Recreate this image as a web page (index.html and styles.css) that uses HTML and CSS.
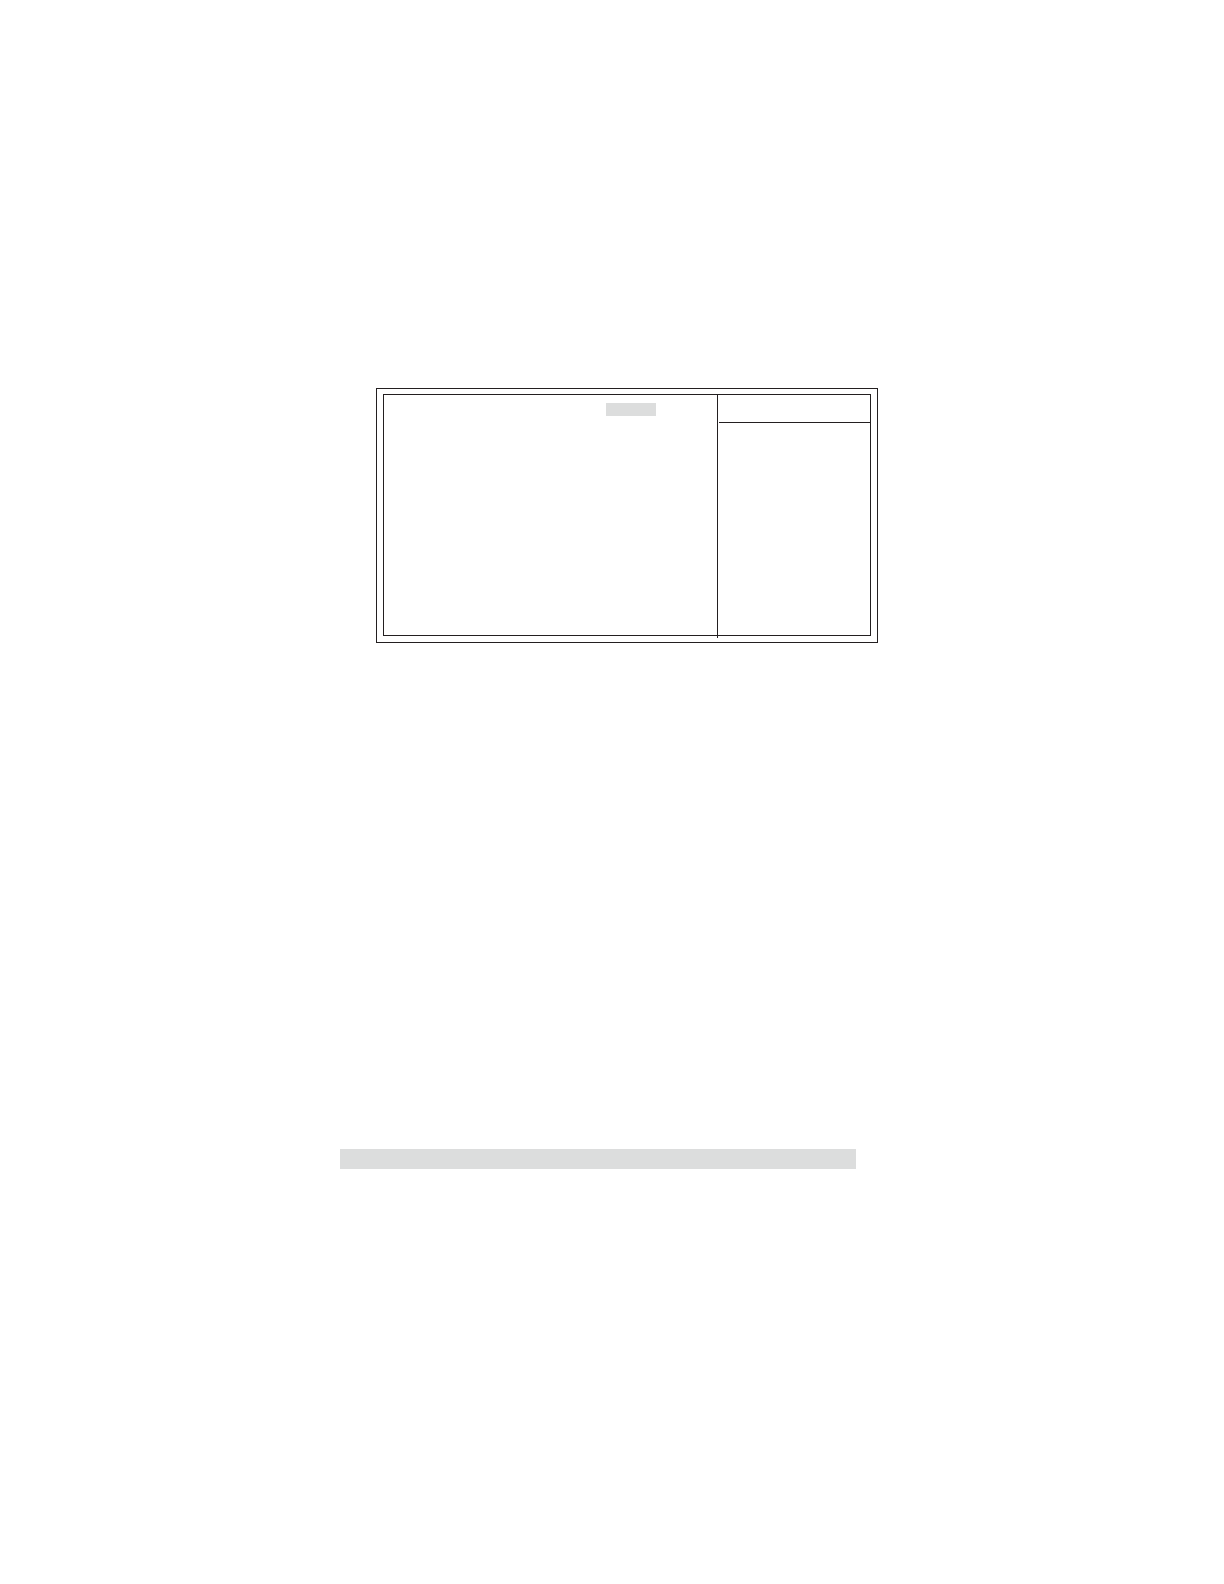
FILE: index.html
```html
<!DOCTYPE html>
<html lang="en">
<head>
<meta charset="utf-8">
<meta name="viewport" content="width=device-width, initial-scale=1">
<title>Setup screen</title>
<link rel="stylesheet" href="styles.css">
</head>
<body>
<main class="page">
  <section class="screen-row">
    <div class="screen">
      <div class="screen-inner">
        <div class="options">
          <div class="selected"></div>
        </div>
        <aside class="help">
          <div class="help-header"></div>
        </aside>
      </div>
    </div>
  </section>
  <section class="band-row">
    <div class="band"></div>
  </section>
</main>
</body>
</html>
```

FILE: styles.css
```css
:root {
  --line: #231f20;
  --shade: #dcdddd;
}

* {
  box-sizing: border-box;
}

body {
  margin: 0;
  background: #fff;
}

.page {
  min-height: 100vh;
  padding-top: 388px;
}

.screen-row {
  display: grid;
  grid-template-columns: 376fr 502fr 346fr;
}

.screen {
  grid-column: 2;
  padding: 5px 6px 6px;
  border: 1px solid var(--line);
}

.screen-inner {
  display: grid;
  grid-template-columns: 333fr 153fr;
  min-height: 242px;
  border: 1px solid var(--line);
}

.options {
  display: grid;
  grid-template-columns: 222fr 50fr 61fr;
  padding-top: 8px;
}

.selected {
  grid-column: 2;
  height: 13px;
  background: var(--shade);
}

/* The divider runs slightly past the inner frame. */
.help {
  margin-bottom: -3px;
  padding-left: 1px;
  border-left: 1px solid var(--line);
}

.help-header {
  height: 28px;
  border-bottom: 1px solid var(--line);
}

.band-row {
  display: grid;
  grid-template-columns: 340fr 516fr 368fr;
  margin-top: 506px;
}

.band {
  grid-column: 2;
  height: 20px;
  background: var(--shade);
}
```
